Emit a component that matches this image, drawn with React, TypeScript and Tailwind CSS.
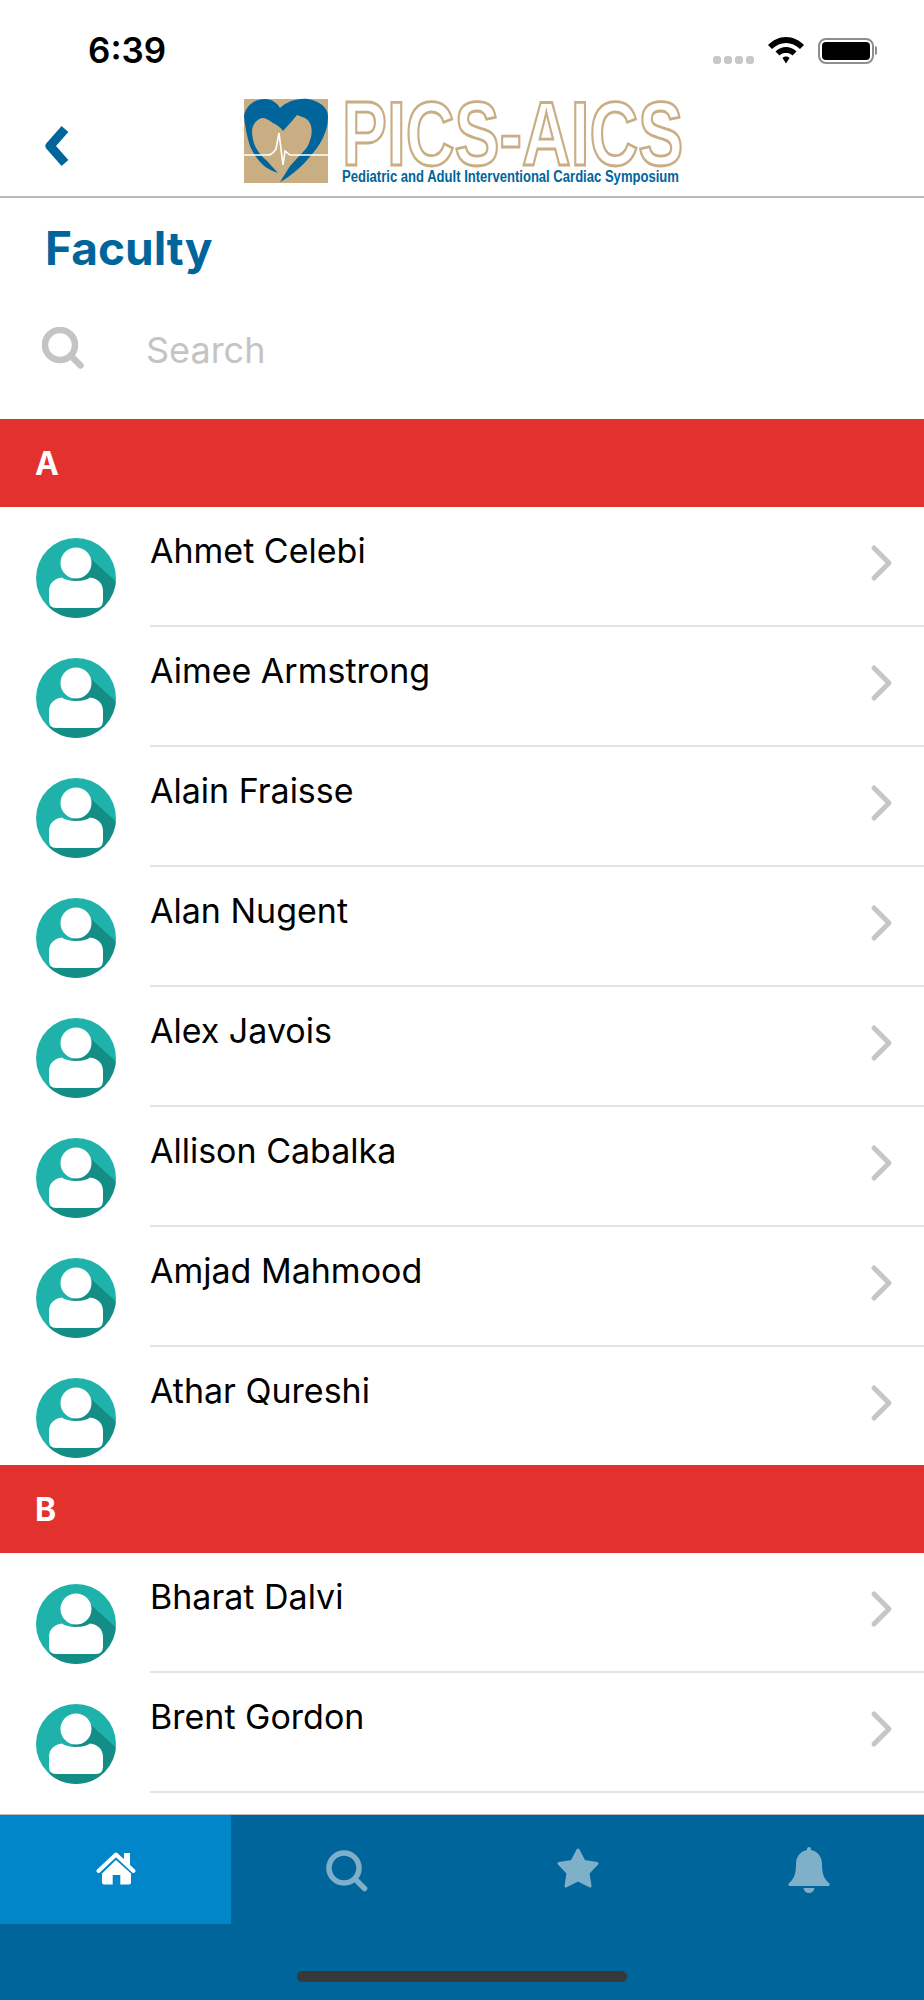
const font = { fontFamily: '"Inter", "Liberation Sans", sans-serif' };

const sectionA = ["Ahmet Celebi", "Aimee Armstrong", "Alain Fraisse", "Alan Nugent", "Alex Javois", "Allison Cabalka", "Amjad Mahmood", "Athar Qureshi"];
const sectionB = ["Bharat Dalvi", "Brent Gordon"];

function Avatar() {
  return (
    <svg width="80" height="80" viewBox="0 0 80 80" className="shrink-0">
      <defs>
        <clipPath id="avatarClip"><circle cx="40" cy="40" r="40" /></clipPath>
      </defs>
      <circle cx="40" cy="40" r="40" fill="#1fb2aa" />
      <g clipPath="url(#avatarClip)">
        <path d="M54 20 L84 47 L84 84 L0 84 L0 70 L13 70 Z" fill="#138d86" />
      </g>
      <circle cx="40" cy="25" r="15.500" fill="#ffffff" />
      <path d="M13 62 L13 53 C13 45 19 40 26 39.500 C31 44 49 44 54 39.500 C61 40 67 45 67 53 L67 62 C67 67 65 70 60 70 L20 70 C15 70 13 67 13 62 Z" fill="#ffffff" />
    </svg>
  );
}

function Row({ name }: { name: string }) {
  return (
    <div className="flex h-[120px] pl-[36px]">
      <div className="pt-[31px]"><Avatar /></div>
      <div className="ml-[34px] flex flex-1 justify-between border-b-2 border-[#e3e3e3]">
        <div className="pt-[22px] text-[34px] leading-[44px] text-black">{name}</div>
        <svg width="24" height="38" viewBox="0 0 24 38" className="mt-[37px] mr-[30px]" fill="none">
          <path d="M4 4 L19 19 L4 34" stroke="#c6c6c8" strokeWidth="5" strokeLinecap="round" strokeLinejoin="round" />
        </svg>
      </div>
    </div>
  );
}

function Section({ letter, names, className }: { letter: string; names: string[]; className?: string }) {
  return (
    <div className={className}>
      <div className="relative flex h-[88px] items-center bg-[#e3312e] pl-[35px] pt-[1px] text-[32px] font-bold text-white">{letter}</div>
      {names.map((n) => <Row key={n} name={n} />)}
    </div>
  );
}

function Logo() {
  return (
    <svg width="442" height="88" viewBox="0 0 442 88" className="block overflow-visible">
      <rect x="0" y="0" width="84" height="84" fill="#c9ae84" />
      <path d="M0 17 C2 6 11 0 21 0 C28 0 33 4 36 9 C42 3 53 -1 64 0 C76 2 84 9 84 17 C84 24 83 29 81 34 C78 42 74 48 69 54 C64 60 59 66 53 71 C48 75 42 80 36 83 L46 67 L58 54 C62 50 65 46 66 41 C68 36 68 31 67 27 C66 23 64 21 61 19 L53 16 L48 22 L39 32 C36 28 33 26 29 24 C25 21 22 19 18 19 C13 20 9 25 8 31 C8 37 9 42 11 47 C14 53 18 58 23 62 L34 74 C28 72 24 70 19 66 C13 60 9 54 6 47 C3 38 1 27 0 17 Z" fill="#00659b" />
      <path d="M0 56 L24 56 C28 56 30 53 32 50 L35 34 L39 66 L41 52 L46 56 L84 56" fill="none" stroke="#ffffff" strokeWidth="1.6" />
      <text transform="translate(98,66) scale(0.75,1)" fontFamily='"Liberation Sans", sans-serif' fontWeight="700" fontSize="90" fill="#ffffff" stroke="#c9ae84" strokeWidth="2.800">PICS-AICS</text>
      <text transform="translate(98,83) scale(0.817,1)" fontFamily='"Liberation Sans", sans-serif' fontWeight="700" fontSize="16" fill="#00659b">Pediatric and Adult Interventional Cardiac Symposium</text>
    </svg>
  );
}

function SearchGlyph({ color, weight }: { color: string; weight: number }) {
  return (
    <svg width="42" height="42" viewBox="0 0 42 42" fill="none">
      <circle cx="18" cy="18" r="15" stroke={color} strokeWidth={weight} />
      <path d="M29 29 L38.500 38.500" stroke={color} strokeWidth={weight} strokeLinecap="round" />
    </svg>
  );
}

export default function App() {
  return (
    <div className="flex h-[2000px] w-[924px] flex-col overflow-hidden bg-white" style={font}>
      <div className="flex h-[99px] items-start pt-[32px]">
        <div className="ml-[88px] text-[35px] leading-[36px] font-semibold text-black">6:39</div>
        <div className="ml-auto mr-[47px] flex items-center pt-[5px]">
          <div className="mr-[14px] mt-[18px] flex gap-[3px]">
            {[0, 1, 2, 3].map((i) => <div key={i} className="h-[8px] w-[8px] rounded-[3px] bg-[#c8c8c8]" />)}
          </div>
          <svg width="36" height="27" viewBox="0 0 36 27" className="mr-[14px]">
            <path d="M18 0 C25 0 31 3 36 8 L32 12 C28 8 23 6 18 6 C13 6 8 8 4 12 L0 8 C5 3 11 0 18 0 Z" fill="#000" />
            <path d="M18 10 C22 10 25.500 11.500 28.500 14.500 L24.500 18.500 C22.500 16.500 20.500 16 18 16 C15.500 16 13.500 16.500 11.500 18.500 L7.500 14.500 C10.500 11.500 14 10 18 10 Z" fill="#000" />
            <path d="M18 19.500 C19.500 19.500 20.500 20 21.500 21 L18 26.500 L14.500 21 C15.500 20 16.500 19.500 18 19.500 Z" fill="#000" />
          </svg>
          <div className="flex items-center">
            <div className="flex h-[26px] w-[56px] items-center justify-center rounded-[8px] border-2 border-[#8e8e8e]">
              <div className="h-[18px] w-[48px] rounded-[4px] bg-black" />
            </div>
            <div className="ml-[1px] h-[9px] w-[2px] rounded-r-full bg-[#8e8e8e]" />
          </div>
        </div>
      </div>

      <div className="flex h-[99px] border-b-2 border-[#b8b8b8]">
        <svg width="28" height="42" viewBox="0 0 28 42" className="ml-[43px] mt-[26px]" fill="none">
          <path d="M22 4 L7 21 L22 38" stroke="#00659b" strokeWidth="9" strokeLinecap="butt" strokeLinejoin="round" />
        </svg>
        <div className="ml-[173px]"><Logo /></div>
      </div>

      <div className="pl-[45px] pt-[23px] text-[46px] leading-[54px] font-bold text-[#00659b]">Faculty</div>

      <div className="flex h-[144px] items-start pl-[42px] pt-[52px]">
        <SearchGlyph color="#c4c4c4" weight={6.500} />
        <div className="ml-[62px] pt-[1px] text-[36px] leading-[44px] text-[#c4c4c6]">Search</div>
      </div>

      <Section letter="A" names={sectionA} />
      <Section letter="B" names={sectionB} className="-mt-[2px]" />

      <div className="flex-1" />

      <div className="h-[186px] border-t border-[#bdbdbd] bg-[#00659b]">
        <div className="grid h-[109px] grid-cols-4">
          <div className="flex items-start justify-center bg-[#0086c9] pt-[37px]">
            <svg width="40" height="33" viewBox="0 0 40 33">
              <path d="M2.500 19 L20 2.500 L37.500 19" fill="none" stroke="#ffffff" strokeWidth="4" strokeLinecap="round" strokeLinejoin="round" />
              <rect x="28" y="1" width="6" height="12" fill="#ffffff" />
              <path d="M20 8 L35 21.500 L35 30.500 C35 31.500 34 32.500 33 32.500 L24.300 32.500 L24.300 23 L16.700 23 L16.700 32.500 L8 32.500 C7 32.500 6 31.500 6 30.500 L6 21.500 Z" fill="#ffffff" />
            </svg>
          </div>
          <div className="flex items-start justify-center pt-[35px]"><SearchGlyph color="#7fb0ca" weight={5.500} /></div>
          <div className="flex items-start justify-center pt-[33px]">
            <svg width="42" height="40" viewBox="0 0 42 40">
              <path d="M21 2 L27 13.500 L40 15.500 L31 25 L33 38 L21 32 L9 38 L11 25 L2 15.500 L15 13.500 Z" fill="#7fb0ca" stroke="#7fb0ca" strokeWidth="3" strokeLinejoin="round" />
            </svg>
          </div>
          <div className="flex items-start justify-center pt-[32px]">
            <svg width="42" height="46" viewBox="0 0 42 46">
              <path d="M21 0 C22.500 0 23 1 23 3 C30 4.500 34 10 34 17 C34 27 36 32 41 36 C42 37 42 39 40 39 L2 39 C0 39 0 37 1 36 C6 32 8 27 8 17 C8 10 12 4.500 19 3 C19 1 19.500 0 21 0 Z" fill="#7fb0ca" />
              <path d="M15.500 41 L26.500 41 C26 44 24 46 21 46 C18 46 16 44 15.500 41 Z" fill="#7fb0ca" />
            </svg>
          </div>
        </div>
        <div className="mt-[47px] flex justify-center">
          <div className="h-[11px] w-[330px] rounded-full bg-[#383838]" />
        </div>
      </div>
    </div>
  );
}
